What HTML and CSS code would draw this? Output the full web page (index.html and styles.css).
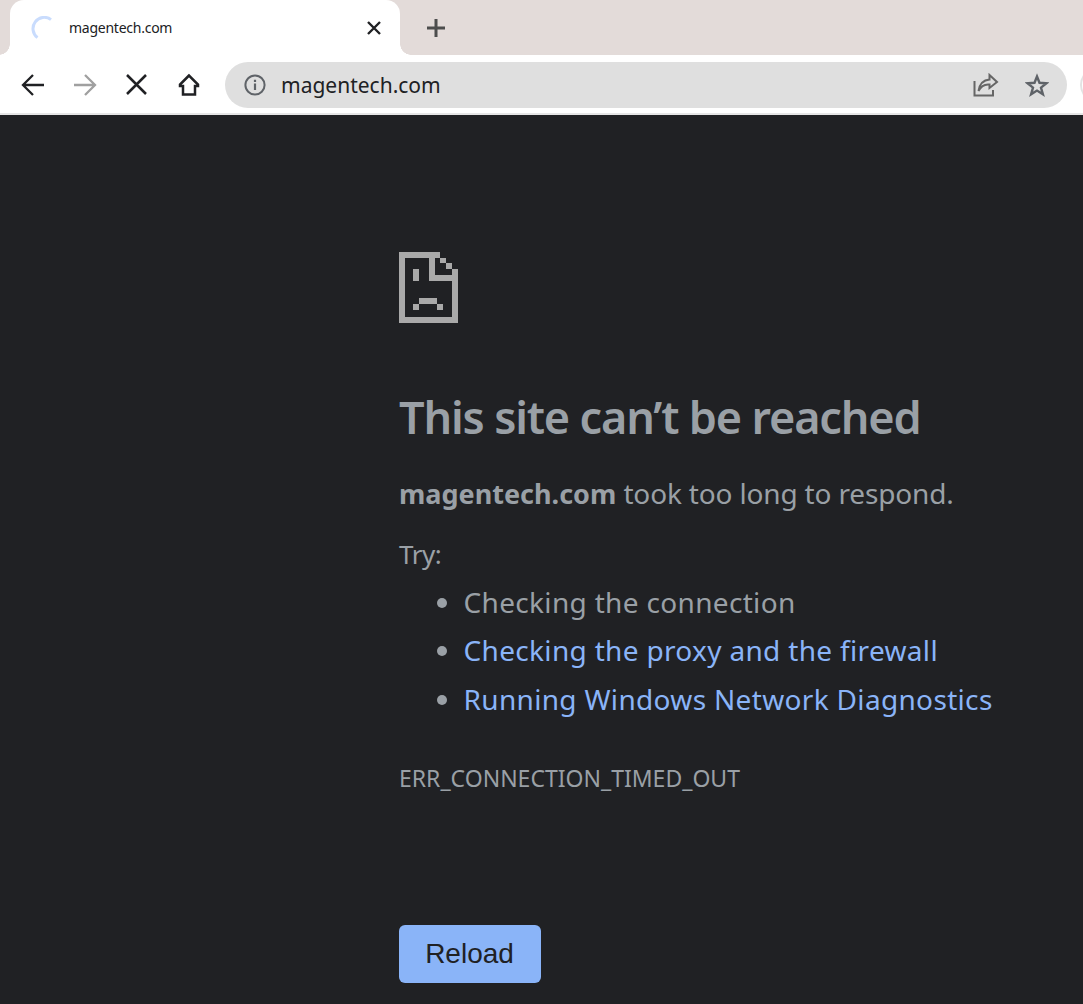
FILE: index.html
```html
<!DOCTYPE html>
<html lang="en">
<head>
<meta charset="utf-8">
<title>magentech.com</title>
<link rel="stylesheet" href="styles.css">
</head>
<body>
<div class="tabstrip">
  <div class="tab">
    <svg class="spinner" width="24" height="24" viewBox="0 0 24 24"><path d="M22 3.6A11 11 0 1 0 8.5 21.6" fill="none" stroke="#c9dcfd" stroke-width="3"/></svg>
    <span class="tab-title">magentech.com</span>
    <svg class="tab-close" width="16" height="16" viewBox="0 0 16 16"><path d="M2 2L14 14M14 2L2 14" stroke="#202124" stroke-width="2.4"/></svg>
  </div>
  <svg class="new-tab" width="20" height="20" viewBox="0 0 20 20"><path d="M10 1V19M1 10H19" stroke="#4d4d4d" stroke-width="3"/></svg>
</div>
<div class="toolbar">
  <svg class="nav" width="24" height="24" viewBox="0 0 24 24"><path d="M23 12H2M12 2L2 12L12 22" fill="none" stroke="#202124" stroke-width="2.3"/></svg>
  <svg class="nav nav-forward" width="24" height="24" viewBox="0 0 24 24"><path d="M1 12H22M12 2L22 12L12 22" fill="none" stroke="#a0a0a0" stroke-width="2.3"/></svg>
  <svg class="nav nav-stop" width="24" height="24" viewBox="0 0 24 24"><path d="M3 2L22 21M22 2L3 21" fill="none" stroke="#202124" stroke-width="2.5"/></svg>
  <svg class="nav nav-home" width="24" height="24" viewBox="0 0 24 24"><path d="M12 2.500L3 11.500V13H6V21.500H18V13H21V11.500Z" fill="none" stroke="#202124" stroke-width="2.500"/></svg>
  <div class="omnibox">
    <svg class="info" width="22" height="22" viewBox="0 0 22 22"><circle cx="11" cy="11" r="9.600" fill="none" stroke="#5f6368" stroke-width="2"/><path d="M9.900 9.500H12.100V16H9.900ZM9.900 5.800H12.100V8H9.900Z" fill="#5f6368"/></svg>
    <span class="url">magentech.com</span>
    <svg class="share" width="26" height="24" viewBox="0 0 26 24"><path d="M1.500 8V22.500H20V17" fill="none" stroke="#666" stroke-width="2"/><path d="M16.500 2L24 9L16.500 15V11.500C12 11 8 13 5.500 18C6.500 11.500 10.500 7 16.500 6.500Z" fill="none" stroke="#666" stroke-width="2"/></svg>
    <svg class="star" width="24" height="24" viewBox="0 0 24 24"><path d="M12 3.500L14.500 9.800L21.500 10.200L16 14.600L17.900 21.300L12 17.600L6.100 21.300L8 14.600L2.500 10.200L9.500 9.800Z" fill="none" stroke="#5f6368" stroke-width="2.400"/></svg>
  </div>
  <div class="avatar"></div>
</div>
<main class="page">
  <div class="content">
    <svg class="sad" width="59" height="71" viewBox="0 0 59 71" shape-rendering="crispEdges" fill="#a9a9a9">
      <rect x="0" y="0" width="41" height="6"/>
      <rect x="0" y="0" width="6" height="71"/>
      <rect x="0" y="65" width="59" height="6"/>
      <rect x="53" y="17" width="6" height="54"/>
      <rect x="30" y="6" width="6" height="23"/>
      <rect x="30" y="23" width="23" height="6"/>
      <rect x="41" y="6" width="6" height="5"/>
      <rect x="47" y="11" width="6" height="6"/>
      <rect x="14" y="17" width="6" height="12"/>
      <rect x="20" y="46" width="18" height="6"/>
      <rect x="14" y="52" width="6" height="6"/>
      <rect x="38" y="52" width="6" height="6"/>
    </svg>
    <h1 class="title">This site can’t be reached</h1>
    <p class="summary"><strong>magentech.com</strong> took too long to respond.</p>
    <p class="try">Try:</p>
    <ul class="suggestions">
      <li>Checking the connection</li>
      <li><a href="#">Checking the proxy and the firewall</a></li>
      <li><a href="#">Running Windows Network Diagnostics</a></li>
    </ul>
    <div class="code">ERR_CONNECTION_TIMED_OUT</div>
    <button class="reload">Reload</button>
  </div>
</main>
</body>
</html>
```
FILE: styles.css
```css
* { box-sizing: border-box; }
html, body { margin: 0; height: 100%; overflow: hidden; }
body { font-family: "Noto Sans", "Open Sans", sans-serif; background: #202124; display: flex; flex-direction: column; }
.tabstrip { height: 55px; background: #e3dbd9; display: flex; align-items: flex-start; padding-left: 10px; flex: none; }
.tab { position: relative; width: 390px; height: 55px; background: #fff; border-radius: 14px 14px 0 0; display: flex; align-items: center; padding: 0 18px 0 19px; }
.tab::before, .tab::after { content: ""; position: absolute; bottom: 0; width: 11px; height: 11px; }
.tab::before { left: -11px; background: radial-gradient(circle at 0 0, #e3dbd9 10.5px, #fff 11px); }
.tab::after { right: -11px; background: radial-gradient(circle at 100% 0, #e3dbd9 10.5px, #fff 11px); }
.spinner { flex: none; }
.tab-title { font-size: 14px; color: #202124; margin-left: 16px; flex: 1; letter-spacing: -0.25px; }
.tab-close { flex: none; }
.new-tab { margin: 18px 0 0 26px; }
.toolbar { height: 60px; background: #fff; display: flex; align-items: center; padding: 2px 0 0 21px; border-bottom: 2px solid #e6e6e6; flex: none; overflow: hidden; }
.nav { flex: none; margin-right: 28px; }
.nav-forward { margin-right: 27px; }
.nav-stop { margin-right: 29px; }
.nav-home { margin-right: 24px; }
.omnibox { width: 842px; height: 46px; flex: none; background: #dfdfdf; border-radius: 23px; display: flex; align-items: center; padding: 0 18px 0 19px; }
.info { flex: none; }
.url { flex: 1; margin-left: 15px; font-size: 21px; color: #202124; }
.share { flex: none; margin-right: 26px; }
.star { flex: none; }
.avatar { width: 36px; height: 36px; flex: none; margin-left: 13px; border-radius: 50%; border: 2px solid #e3e3e3; }
.page { flex: 1; padding: 137px 0 0 399px; overflow: hidden; }
.content { width: 640px; color: #9aa0a6; }
.sad { display: block; }
.title { margin: 62px 0 0; font-size: 45px; font-weight: 600; line-height: 64px; color: #9aa0a6; letter-spacing: -1.16px; white-space: nowrap; }
.summary { margin: 20px 0 0; font-size: 28px; line-height: 48px; letter-spacing: -0.16px; white-space: nowrap; }
.summary strong { font-size: 27px; font-weight: 700; letter-spacing: 0; }
.try { margin: 12px 0 0; font-size: 26px; line-height: 48px; letter-spacing: -0.5px; }
.suggestions { margin: 0; padding: 0 0 0 64.500px; font-size: 28px; line-height: 48.300px; letter-spacing: 0.33px; white-space: nowrap; }
.suggestions a { color: #8ab4f8; text-decoration: none; }
.code { margin-top: 39px; font-size: 23px; line-height: 32px; }
.reload { display: block; margin-top: 131px; width: 142px; height: 58px; border: 0; border-radius: 6px; background: #8ab4f8; color: #202124; font-family: "Liberation Sans", Arial, sans-serif; font-size: 28px; padding: 1px 1px 0 0; }
```
